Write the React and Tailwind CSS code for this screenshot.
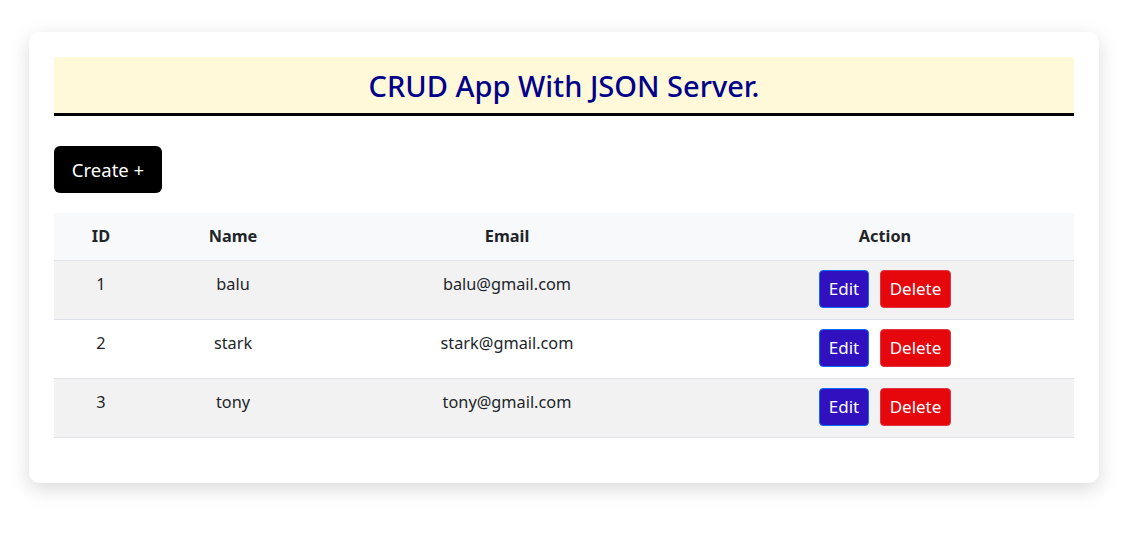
export default function App() {
  const users = [
    { id: 1, name: 'balu', email: 'balu@gmail.com' },
    { id: 2, name: 'stark', email: 'stark@gmail.com' },
    { id: 3, name: 'tony', email: 'tony@gmail.com' },
  ];

  return (
    <div className="min-h-[539px] bg-white pt-8 px-[29px] font-['Noto_Sans','Open_Sans',sans-serif] text-[#212529]">
      {/* Card */}
      <div className="w-[1070px] bg-white rounded-[10px] shadow-[0_6px_20px_rgba(0,0,0,0.15)] p-[25px] pb-[45px]">
        {/* Title */}
        <div className="h-[59px] bg-[#fff8d9] border-b-[3px] border-black flex items-center justify-center">
          <h1 className="text-[29px] font-medium text-[#00008b] leading-none">CRUD App With JSON Server.</h1>
        </div>

        {/* Create button */}
        <div className="mt-[30px]">
          <button className="h-[47px] w-[108px] bg-black text-white rounded-[6px] text-[18.5px] flex items-center justify-center">
            Create +
          </button>
        </div>

        {/* Table */}
        <table className="mt-5 w-full border-collapse text-[16.3px]">
          <thead>
            <tr className="bg-[#f8f9fa] border-b border-[#dee2e6] h-[47px]">
              <th className="w-[94px] font-bold text-center">ID</th>
              <th className="w-[170px] font-bold text-center">Name</th>
              <th className="w-[378px] font-bold text-center">Email</th>
              <th className="w-[378px] font-bold text-center">Action</th>
            </tr>
          </thead>
          <tbody>
            {users.map((u, i) => (
              <tr key={u.id} className={`border-b border-[#dee2e6] h-[59px] ${i % 2 === 0 ? 'bg-[#f2f2f2]' : 'bg-white'}`}>
                <td className="text-center align-top pt-[11px]">{u.id}</td>
                <td className="text-center align-top pt-[11px]">{u.name}</td>
                <td className="text-center align-top pt-[11px]">{u.email}</td>
                <td className="align-middle">
                  <div className="flex justify-center gap-[11px] -mt-px">
                    <button className="h-[38px] w-[50px] bg-[#3010bf] border border-[#0d6efd] text-white rounded-[4px] text-[17px]">Edit</button>
                    <button className="h-[38px] w-[71px] bg-[#e6070c] border border-[#dc3545] text-white rounded-[4px] text-[17px]">Delete</button>
                  </div>
                </td>
              </tr>
            ))}
          </tbody>
        </table>
      </div>
    </div>
  );
}
